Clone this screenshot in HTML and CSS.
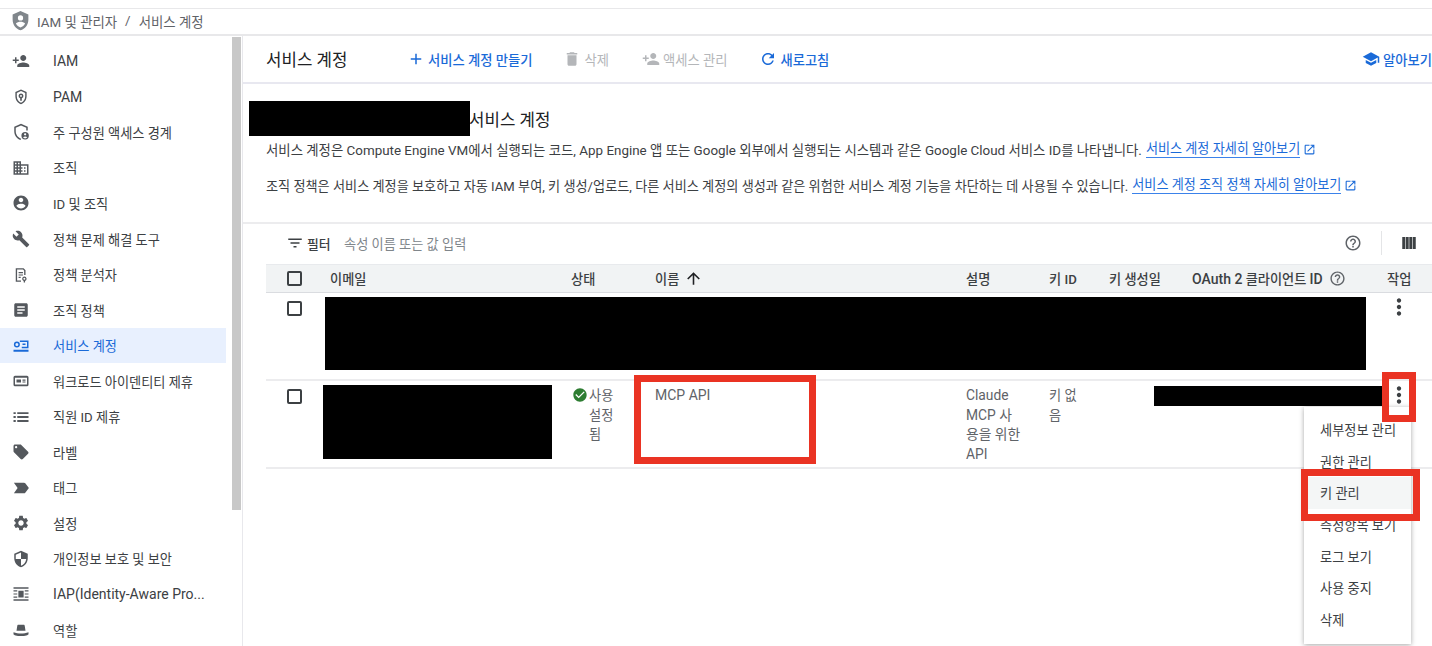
FILE: index.html
```html
<!DOCTYPE html>
<html lang="ko">
<head>
<meta charset="utf-8">
<title>서비스 계정</title>
<link rel="stylesheet" href="styles.css">
</head>
<body>
<svg class="sprite" aria-hidden="true">
<symbol id="i-person-add" viewBox="0 0 24 24"><path d="M15 12c2.21 0 4-1.79 4-4s-1.79-4-4-4-4 1.79-4 4 1.79 4 4 4zm-9-2V7H4v3H1v2h3v3h2v-3h3v-2H6zm9 4c-2.67 0-8 1.34-8 4v2h16v-2c0-2.66-5.33-4-8-4z"/></symbol>
<symbol id="i-pam" viewBox="0 0 24 24"><path fill-rule="evenodd" d="M12 2 4.500 5.300V11c0 4.900 3.200 9.400 7.500 10.700 4.300-1.300 7.500-5.800 7.500-10.700V5.300zm0 2.100 5.600 2.500V11c0 3.900-2.400 7.500-5.600 8.700-3.200-1.200-5.600-4.800-5.600-8.700V6.600zM12 7.200a3.300 3.300 0 0 0-1.100 6.400V17h2.200v-3.400A3.300 3.300 0 0 0 12 7.200zm0 2a1.300 1.300 0 1 1 0 2.600 1.300 1.300 0 0 1 0-2.600z"/></symbol>
<symbol id="i-perimeter" viewBox="0 0 24 24"><path fill-rule="evenodd" d="M12 1 3 5v6c0 5.300 3.500 10.300 8.300 11.800l1-1.900C8.100 19.700 5 15.500 5 11V6.300l7-3.100 7 3.100V10h2V5zM17.500 12a4.500 4.500 0 1 0 0 9.900 4.500 4.500 0 0 0 0-9.900zm0 1.500a1.500 1.500 0 1 1 0 3 1.500 1.500 0 0 1 0-3zm0 7a3.600 3.600 0 0 1-2.800-1.400c.7-.7 1.800-1.100 2.800-1.100s2.100.4 2.800 1.100a3.600 3.600 0 0 1-2.800 1.400z"/></symbol>
<symbol id="i-org" viewBox="0 0 24 24"><path d="M12 7V3H2v18h20V7H12zM6 19H4v-2h2v2zm0-4H4v-2h2v2zm0-4H4V9h2v2zm0-4H4V5h2v2zm4 12H8v-2h2v2zm0-4H8v-2h2v2zm0-4H8V9h2v2zm0-4H8V5h2v2zm10 12h-8v-2h2v-2h-2v-2h2v-2h-2V9h8v10zm-2-8h-2v2h2v-2zm0 4h-2v2h2v-2z"/></symbol>
<symbol id="i-account" viewBox="0 0 24 24"><path d="M12 2C6.480 2 2 6.480 2 12s4.480 10 10 10 10-4.480 10-10S17.520 2 12 2zm0 3c1.660 0 3 1.340 3 3s-1.340 3-3 3-3-1.340-3-3 1.340-3 3-3zm0 14.200c-2.500 0-4.710-1.280-6-3.220.03-1.990 4-3.080 6-3.080 1.990 0 5.970 1.090 6 3.080-1.290 1.940-3.500 3.220-6 3.220z"/></symbol>
<symbol id="i-build" viewBox="0 0 24 24"><path d="M22.700 19l-9.100-9.100c.9-2.300.4-5-1.500-6.900-2-2-5-2.400-7.400-1.300L9 6 6 9 1.600 4.700C.4 7.100.9 10.100 2.900 12.100c1.900 1.900 4.600 2.400 6.900 1.500l9.100 9.100c.4.4 1 .4 1.400 0l2.300-2.300c.5-.4.5-1.100.1-1.400z"/></symbol>
<symbol id="i-analyzer" viewBox="0 0 24 24"><path d="M5 3h10.500L18 5.500V12h-1.800V6.300L14.700 4.800H6.800v14.400H12V21H5zM8.800 8h5.800v1.500H8.800zm0 3.200h5.800v1.500H8.800zm0 3.200h2.800v1.500H8.800z"/><path fill-rule="evenodd" d="M16.500 14a3 3 0 0 0-.9 5.850V22h1.800v-2.150A3 3 0 0 0 16.500 14zm0 1.700a1.300 1.300 0 1 1 0 2.600 1.300 1.300 0 0 1 0-2.600z"/></symbol>
<symbol id="i-article" viewBox="0 0 24 24"><path d="M19 3H5c-1.100 0-2 .9-2 2v14c0 1.100.9 2 2 2h14c1.100 0 2-.9 2-2V5c0-1.100-.9-2-2-2zm-5 14H7v-2h7v2zm3-4H7v-2h10v2zm0-4H7V7h10v2z"/></symbol>
<symbol id="i-service" viewBox="0 0 24 24"><path fill-rule="evenodd" d="M6.500 6a4 4 0 1 0 0 8 4 4 0 0 0 0-8zm0 2a2 2 0 1 1 0 4 2 2 0 0 1 0-4zM10.500 4.500H22V15h-9v-2h7V6.500h-9.500zM14 8.700h4v2h-4zM2 17h20v2.500H2z"/></symbol>
<symbol id="i-workload" viewBox="0 0 24 24"><path fill-rule="evenodd" d="M4 5h16a2 2 0 0 1 2 2v10a2 2 0 0 1-2 2H4a2 2 0 0 1-2-2V7a2 2 0 0 1 2-2zm0 2.500V16.500h16V7.500zM6 10h6v4H6zm8 0h4v1.600h-4zm0 2.500h4v1.600h-4z"/></symbol>
<symbol id="i-list" viewBox="0 0 24 24"><path d="M2 13.200h3v-2.400H2zm0 5.300h3v-2.400H2zm0-10.600h3V5.500H2zm5 5.300h15v-2.400H7zm0 5.300h15v-2.400H7zM7 5.500v2.400h15V5.500z"/></symbol>
<symbol id="i-label" viewBox="0 0 24 24"><path d="M21.410 11.580l-9-9C12.050 2.220 11.550 2 11 2H4c-1.100 0-2 .9-2 2v7c0 .55.22 1.050.59 1.420l9 9c.36.36.86.58 1.410.58.55 0 1.050-.22 1.410-.59l7-7c.37-.36.59-.86.59-1.410 0-.55-.23-1.060-.59-1.420zM5.500 7C4.670 7 4 6.330 4 5.500S4.670 4 5.500 4 7 4.670 7 5.500 6.330 7 5.500 7z"/></symbol>
<symbol id="i-tag" viewBox="0 0 24 24"><path d="M2.500 5H16c.7 0 1.300.3 1.700.8L22.500 12l-4.800 6.200c-.4.5-1 .8-1.700.8H2.500L7.500 12z"/></symbol>
<symbol id="i-settings" viewBox="0 0 24 24"><path d="M19.140 12.940c.04-.3.06-.61.06-.94 0-.32-.02-.64-.07-.94l2.030-1.580c.18-.14.23-.41.12-.61l-1.920-3.320c-.12-.22-.37-.29-.59-.22l-2.390.96c-.5-.38-1.030-.7-1.620-.94l-.36-2.540c-.04-.24-.24-.41-.48-.41h-3.840c-.24 0-.43.17-.47.41l-.36 2.540c-.59.24-1.130.57-1.620.94l-2.390-.96c-.22-.08-.47 0-.59.22L2.740 8.870c-.12.21-.08.47.12.61l2.030 1.580c-.05.3-.09.63-.09.94s.02.64.07.94l-2.030 1.580c-.18.14-.23.41-.12.61l1.920 3.320c.12.22.37.29.59.22l2.390-.96c.5.38 1.030.7 1.620.94l.36 2.540c.05.24.24.41.48.41h3.840c.24 0 .44-.17.47-.41l.36-2.540c.59-.24 1.130-.56 1.620-.94l2.390.96c.22.08.47 0 .59-.22l1.920-3.320c.12-.22.07-.47-.12-.61l-2.010-1.580zM12 15.600c-1.980 0-3.600-1.620-3.600-3.600s1.620-3.600 3.600-3.600 3.600 1.620 3.600 3.600-1.620 3.600-3.600 3.600z"/></symbol>
<symbol id="i-security" viewBox="0 0 24 24"><path d="M12 1L3 5v6c0 5.550 3.840 10.740 9 12 5.160-1.260 9-6.450 9-12V5l-9-4zm0 10.990h7c-.53 4.120-3.280 7.790-7 8.940V12H5V6.300l7-3.110v8.800z"/></symbol>
<symbol id="i-iap" viewBox="0 0 24 24"><path d="M2 3h20v2H2zM2 19h20v2H2zM2 7h5v1.600H2zM17 7h5v1.600h-5zM2 11.200h5v1.600H2zM17 11.200h5v1.600h-5zM2 15.400h5v1.600H2zM17 15.400h5v1.600h-5zM8.500 7.500h7v9h-7z"/></symbol>
<symbol id="i-role" viewBox="0 0 24 24"><path d="M7 6.500c0-.8.7-1.500 1.500-1.500h7c.8 0 1.500.7 1.500 1.500l1 6.500H6zM2 15c3 1.200 6.500 1.700 10 1.700s7-.5 10-1.700v2.500c0 1-4.500 2.500-10 2.500S2 18.500 2 17.500z"/></symbol>
<symbol id="i-shield-user" viewBox="0 0 24 24"><path fill-rule="evenodd" d="M12 1 3 5v6c0 5.550 3.840 10.740 9 12 5.160-1.260 9-6.450 9-12V5zm0 5a3 3 0 1 1 0 6 3 3 0 0 1 0-6zm0 14c-2.300-.7-4.200-2.400-5.300-4.500 1.300-1.400 3.400-2 5.300-2s4 .6 5.300 2c-1.100 2.100-3 3.800-5.300 4.500z"/></symbol>
<symbol id="i-add" viewBox="0 0 24 24"><path d="M19 13h-6v6h-2v-6H5v-2h6V5h2v6h6v2z"/></symbol>
<symbol id="i-delete" viewBox="0 0 24 24"><path d="M6 19c0 1.100.9 2 2 2h8c1.100 0 2-.9 2-2V7H6v12zM19 4h-3.500l-1-1h-5l-1 1H5v2h14V4z"/></symbol>
<symbol id="i-refresh" viewBox="0 0 24 24"><path d="M17.650 6.350C16.200 4.900 14.210 4 12 4c-4.420 0-7.990 3.580-7.990 8s3.570 8 7.990 8c3.730 0 6.840-2.550 7.730-6h-2.080c-.82 2.330-3.040 4-5.650 4-3.310 0-6-2.690-6-6s2.690-6 6-6c1.660 0 3.140.69 4.220 1.780L13 11h7V4l-2.350 2.350z"/></symbol>
<symbol id="i-school" viewBox="0 0 24 24"><path d="M5 13.180v4L12 21l7-3.820v-4L12 17l-7-3.820zM12 3L1 9l11 6 9-4.910V17h2V9L12 3z"/></symbol>
<symbol id="i-open" viewBox="0 0 24 24"><path d="M19 19H5V5h7V3H5c-1.110 0-2 .9-2 2v14c0 1.100.89 2 2 2h14c1.100 0 2-.9 2-2v-7h-2v7zM14 3v2h3.590l-9.830 9.830 1.410 1.410L19 6.410V10h2V3h-7z"/></symbol>
<symbol id="i-filter" viewBox="0 0 24 24"><path d="M10 18h4v-2h-4v2zM3 6v2h18V6H3zm3 7h12v-2H6v2z"/></symbol>
<symbol id="i-help" viewBox="0 0 24 24"><path d="M11 18h2v-2h-2v2zm1-16C6.480 2 2 6.480 2 12s4.480 10 10 10 10-4.480 10-10S17.520 2 12 2zm0 18c-4.410 0-8-3.590-8-8s3.590-8 8-8 8 3.590 8 8-3.590 8-8 8zm0-14c-2.210 0-4 1.790-4 4h2c0-1.100.9-2 2-2s2 .9 2 2c0 2-3 1.750-3 5h2c0-2.250 3-2.500 3-5 0-2.210-1.790-4-4-4z"/></symbol>
<symbol id="i-columns" viewBox="0 0 24 24"><path d="M3 4h3.900v16H3zM7.700 4h3.900v16H7.700zM12.400 4h3.900v16h-3.900zM17.100 4H21v16h-3.900z"/></symbol>
<symbol id="i-up" viewBox="0 0 24 24"><path d="M4 12l1.410 1.410L11 7.830V20h2V7.830l5.580 5.590L20 12l-8-8-8 8z"/></symbol>
<symbol id="i-more" viewBox="0 0 24 24"><path d="M12 8c1.100 0 2-.9 2-2s-.9-2-2-2-2 .9-2 2 .9 2 2 2zm0 2c-1.100 0-2 .9-2 2s.9 2 2 2 2-.9 2-2-.9-2-2-2zm0 6c-1.100 0-2 .9-2 2s.9 2 2 2 2-.9 2-2-.9-2-2-2z"/></symbol>
<symbol id="i-check" viewBox="0 0 24 24"><path d="M12 2C6.480 2 2 6.480 2 12s4.480 10 10 10 10-4.480 10-10S17.520 2 12 2zm-2 15l-5-5 1.410-1.410L10 14.170l7.590-7.590L19 8l-9 9z"/></symbol>
</svg>

<header class="crumbs">
  <svg class="crumb-icon"><use href="#i-shield-user"/></svg>
  <span>IAM 및 관리자</span><span class="crumb-sep">/</span><span>서비스 계정</span>
</header>

<div class="app">
  <nav class="side">
    <ul class="nav-list">
      <li class="nav-item"><svg class="nav-icon"><use href="#i-person-add"/></svg><span class="lat">IAM</span></li>
      <li class="nav-item"><svg class="nav-icon"><use href="#i-pam"/></svg><span class="lat">PAM</span></li>
      <li class="nav-item"><svg class="nav-icon"><use href="#i-perimeter"/></svg><span>주 구성원 액세스 경계</span></li>
      <li class="nav-item"><svg class="nav-icon"><use href="#i-org"/></svg><span>조직</span></li>
      <li class="nav-item"><svg class="nav-icon"><use href="#i-account"/></svg><span>ID 및 조직</span></li>
      <li class="nav-item"><svg class="nav-icon"><use href="#i-build"/></svg><span>정책 문제 해결 도구</span></li>
      <li class="nav-item"><svg class="nav-icon"><use href="#i-analyzer"/></svg><span>정책 분석자</span></li>
      <li class="nav-item"><svg class="nav-icon"><use href="#i-article"/></svg><span>조직 정책</span></li>
      <li class="nav-item active"><svg class="nav-icon"><use href="#i-service"/></svg><span>서비스 계정</span></li>
      <li class="nav-item"><svg class="nav-icon"><use href="#i-workload"/></svg><span>워크로드 아이덴티티 제휴</span></li>
      <li class="nav-item"><svg class="nav-icon"><use href="#i-list"/></svg><span>직원 ID 제휴</span></li>
      <li class="nav-item"><svg class="nav-icon"><use href="#i-label"/></svg><span>라벨</span></li>
      <li class="nav-item"><svg class="nav-icon"><use href="#i-tag"/></svg><span>태그</span></li>
      <li class="nav-item"><svg class="nav-icon"><use href="#i-settings"/></svg><span>설정</span></li>
      <li class="nav-item"><svg class="nav-icon"><use href="#i-security"/></svg><span>개인정보 보호 및 보안</span></li>
      <li class="nav-item"><svg class="nav-icon"><use href="#i-iap"/></svg><span class="lat">IAP(Identity-Aware Pro...</span></li>
      <li class="nav-item"><svg class="nav-icon"><use href="#i-role"/></svg><span>역할</span></li>
    </ul>
    <div class="scroll"><div class="thumb"></div></div>
  </nav>

  <main class="main">
    <div class="toolbar">
      <h1 class="page-title">서비스 계정</h1>
      <div class="tool t-create"><svg class="tool-icon"><use href="#i-add"/></svg>서비스 계정 만들기</div>
      <div class="tool off t-delete"><svg class="tool-icon"><use href="#i-delete"/></svg>삭제</div>
      <div class="tool off t-access"><svg class="tool-icon"><use href="#i-person-add"/></svg>액세스 관리</div>
      <div class="tool t-refresh"><svg class="tool-icon"><use href="#i-refresh"/></svg>새로고침</div>
      <div class="tool t-learn"><svg class="tool-icon"><use href="#i-school"/></svg>알아보기</div>
    </div>

    <section class="intro">
      <h2 class="project-title"><span class="project-name"></span>서비스 계정</h2>
      <p class="para">서비스 계정은 Compute Engine VM에서 실행되는 코드, App Engine 앱 또는 Google 외부에서 실행되는 시스템과 같은 Google Cloud 서비스 ID를 나타냅니다. <a class="link">서비스 계정 자세히 알아보기</a><svg class="ext"><use href="#i-open"/></svg></p>
      <p class="para para-org">조직 정책은 서비스 계정을 보호하고 자동 IAM 부여, 키 생성/업로드, 다른 서비스 계정의 생성과 같은 위험한 서비스 계정 기능을 차단하는 데 사용될 수 있습니다. <a class="link">서비스 계정 조직 정책 자세히 알아보기</a><svg class="ext"><use href="#i-open"/></svg></p>
    </section>

    <div class="filter">
      <svg class="filter-icon"><use href="#i-filter"/></svg>
      <span class="filter-label">필터</span>
      <span class="filter-hint">속성 이름 또는 값 입력</span>
      <svg class="help-icon"><use href="#i-help"/></svg>
      <span class="filter-div"></span>
      <svg class="col-icon"><use href="#i-columns"/></svg>
    </div>

    <div class="table">
      <div class="row head">
        <div class="cell c-check"><span class="box"></span></div>
        <div class="cell">이메일</div>
        <div class="cell">상태</div>
        <div class="cell">이름<svg class="sort"><use href="#i-up"/></svg></div>
        <div class="cell">설명</div>
        <div class="cell">키 ID</div>
        <div class="cell">키 생성일</div>
        <div class="cell"><span class="lat">OAuth 2</span>&nbsp;클라이언트&nbsp;<span class="lat">ID</span><svg class="head-help"><use href="#i-help"/></svg></div>
        <div class="cell">작업</div>
      </div>
      <div class="row body">
        <div class="cell c-check"><span class="box"></span></div>
        <div class="cell"></div><div class="cell"></div><div class="cell"></div><div class="cell"></div>
        <div class="cell"></div><div class="cell"></div><div class="cell"></div>
        <div class="cell c-act"><svg class="more"><use href="#i-more"/></svg></div>
      </div>
      <div class="row body">
        <div class="cell c-check"><span class="box"></span></div>
        <div class="cell"></div>
        <div class="cell c-status"><svg class="ok"><use href="#i-check"/></svg><span class="wrap w-status">사용 설정 됨</span></div>
        <div class="cell lat">MCP API</div>
        <div class="cell"><span class="wrap w-desc">Claude MCP 사용을 위한 API</span></div>
        <div class="cell"><span class="wrap w-key">키 없음</span></div>
        <div class="cell"></div><div class="cell"></div>
        <div class="cell c-act"><svg class="more"><use href="#i-more"/></svg></div>
      </div>
    </div>
  </main>
</div>

<div class="redact r-title"></div>
<div class="redact r-row1"></div>
<div class="redact r-email"></div>
<div class="redact r-oauth"></div>

<ul class="menu">
  <li class="menu-item">세부정보 관리</li>
  <li class="menu-item">권한 관리</li>
  <li class="menu-item hover">키 관리</li>
  <li class="menu-item">측정항목 보기</li>
  <li class="menu-item">로그 보기</li>
  <li class="menu-item">사용 중지</li>
  <li class="menu-item">삭제</li>
</ul>

<div class="mark m-name"></div>
<div class="mark m-more"></div>
<div class="mark m-key"></div>
</body>
</html>
```

FILE: styles.css
```css
* { box-sizing: border-box; }
html, body { margin: 0; padding: 0; height: 646px; overflow: hidden; background: #fff; }
body {
  position: relative;
  padding-top: 8px;
  font-family: Roboto, "Noto Sans CJK KR", sans-serif;
  font-size: 13.200px;
  color: #3c4043;
}
svg { fill: currentColor; display: block; flex: none; }
.sprite { display: none; }
ul { list-style: none; margin: 0; padding: 0; }
.lat { font-size: 14px; }

.crumbs {
  height: 28px;
  display: flex;
  align-items: center;
  padding: 0 0 2px 10px;
  border-top: 1px solid #e8e8ea;
  border-bottom: 2px solid #e8e8ea;
  color: #5f6368;
  font-size: 13.400px;
}
.crumb-icon { width: 21px; height: 21px; margin-right: 6px; color: #80868b; }
.crumb-sep { margin: 0 8px; }

.app { display: flex; height: 610px; }
.side { width: 243px; flex: none; display: flex; border-right: 1px solid #e8e8ec; }
.nav-list { width: 226px; flex: none; padding-top: 7.500px; }
.nav-item {
  height: 35.550px;
  display: flex;
  align-items: center;
  padding-left: 12px;
  color: #3c4043;
  white-space: nowrap;
}
.nav-item.active { background: #e8f0fe; color: #1a6ad8; }
.nav-icon { width: 18px; height: 18px; margin-right: 23px; color: #54585d; }
.active .nav-icon { color: #1a6ad8; }
.scroll { flex: 1; padding: 1px 1px 0 6px; }
.thumb { height: 473px; background: #c8c8c8; }

.main { flex: 1; min-width: 0; }
.toolbar {
  height: 48px;
  display: flex;
  align-items: center;
  padding-left: 23px;
  border-bottom: 2px solid #e8e8f0;
}
.page-title { margin: 0; width: 141px; font-size: 16.800px; font-weight: 400; color: #202124; }
.tool { display: flex; align-items: center; color: #1a6ad8; font-size: 13.300px; font-weight: 500; white-space: nowrap; }
.tool.off { color: #b4b6b9; font-weight: 400; }
.tool-icon { width: 18px; height: 18px; margin-right: 3px; }
.t-delete { margin-left: 31px; }
.t-access { margin-left: 33px; }
.t-refresh { margin-left: 32px; }
.t-learn { margin-left: auto; }

.intro { height: 140px; padding: 17px 0 0 23px; border-bottom: 2px solid #ececee; }
.project-title { margin: 0 0 3px; height: 35px; display: flex; align-items: center; font-size: 16.800px; font-weight: 400; color: #202124; }
.project-name { width: 203px; flex: none; }
.para { margin: 0 0 16px; height: 20px; white-space: nowrap; display: flex; align-items: center; font-size: 13.400px; color: #3c4043; }
.para-org { font-size: 13.150px; }
.link { color: #1a6ad8; border-bottom: 1px solid #3b82ea; font-size: 13.100px; line-height: 17px; margin-left: 4px; }
.ext { width: 13px; height: 13px; margin-left: 3px; color: #1a6ad8; }

.filter { height: 40px; margin-left: 23px; display: flex; align-items: center; padding: 0 0 2px 20px; }
.filter-icon { width: 18px; height: 18px; margin-right: 3px; color: #3c4043; }
.filter-label { font-weight: 500; color: #3c4043; width: 37px; font-size: 12.800px; }
.filter-hint { color: #80868b; font-size: 13.200px; }
.help-icon { width: 18px; height: 18px; margin-left: auto; color: #5f6368; }
.filter-div { width: 1px; height: 24px; margin: 0 18px 0 19px; background: #e4e5e7; }
.col-icon { width: 18px; height: 18px; margin-right: 14px; color: #3c4043; }

.table { margin-left: 23px; }
.row {
  display: grid;
  grid-template-columns: 64px 241px 84px 311px 83px 60px 83px 195px 45px;
}
.cell { min-width: 0; }
.head { height: 29px; background: #f1f3f4; border-top: 1px solid #e8eaed; border-bottom: 1px solid #dadce0; align-items: center; font-weight: 500; font-size: 13.200px; color: #3c4043; }
.head .cell { display: flex; align-items: center; white-space: nowrap; }
.body { height: 88px; border-bottom: 2px solid #ececee; color: #5f6368; padding-top: 5px; line-height: 19.600px; }
.c-check { padding-left: 21px; }
.box { display: block; width: 15px; height: 15px; border: 2px solid #3c4043; border-radius: 2px; }
.body .box { margin-top: 3px; }
.sort { width: 19px; height: 19px; margin-left: 5px; color: #202124; }
.head-help { width: 17px; height: 17px; margin-left: 6px; color: #5f6368; }
.c-status { display: flex; align-items: flex-start; }
.ok { width: 16px; height: 16px; margin: 1px 1px 0 1px; color: #2e7d32; }
.wrap { display: block; }
.w-status { width: 30px; }
.w-desc { width: 56px; font-size: 13.800px; }
.w-key { width: 34px; }
.more { width: 26px; height: 26px; color: #3c4043; margin: -4px 0 0 -1px; }

.redact { position: absolute; background: #000; }
.r-title { left: 249px; top: 101px; width: 221px; height: 35px; }
.r-row1 { left: 325px; top: 297px; width: 1041px; height: 73px; }
.r-email { left: 323px; top: 385px; width: 229px; height: 74px; }
.r-oauth { left: 1154px; top: 386px; width: 231px; height: 20px; }

.menu {
  position: absolute;
  left: 1304px;
  top: 407px;
  width: 107px;
  height: 237px;
  padding-top: 7px;
  background: #fff;
  box-shadow: 0 1px 5px rgba(0,0,0,.35);
}
.menu-item { height: 31.600px; display: flex; align-items: center; padding-left: 16px; white-space: nowrap; color: #3c4043; }
.menu-item.hover { background: #f4f6f6; }

.mark { position: absolute; border: 7px solid #ea3323; }
.m-name { left: 634px; top: 375px; width: 182px; height: 89px; }
.m-more { left: 1382px; top: 372px; width: 34px; height: 50px; }
.m-key { left: 1301px; top: 469px; width: 119px; height: 52px; }
```
